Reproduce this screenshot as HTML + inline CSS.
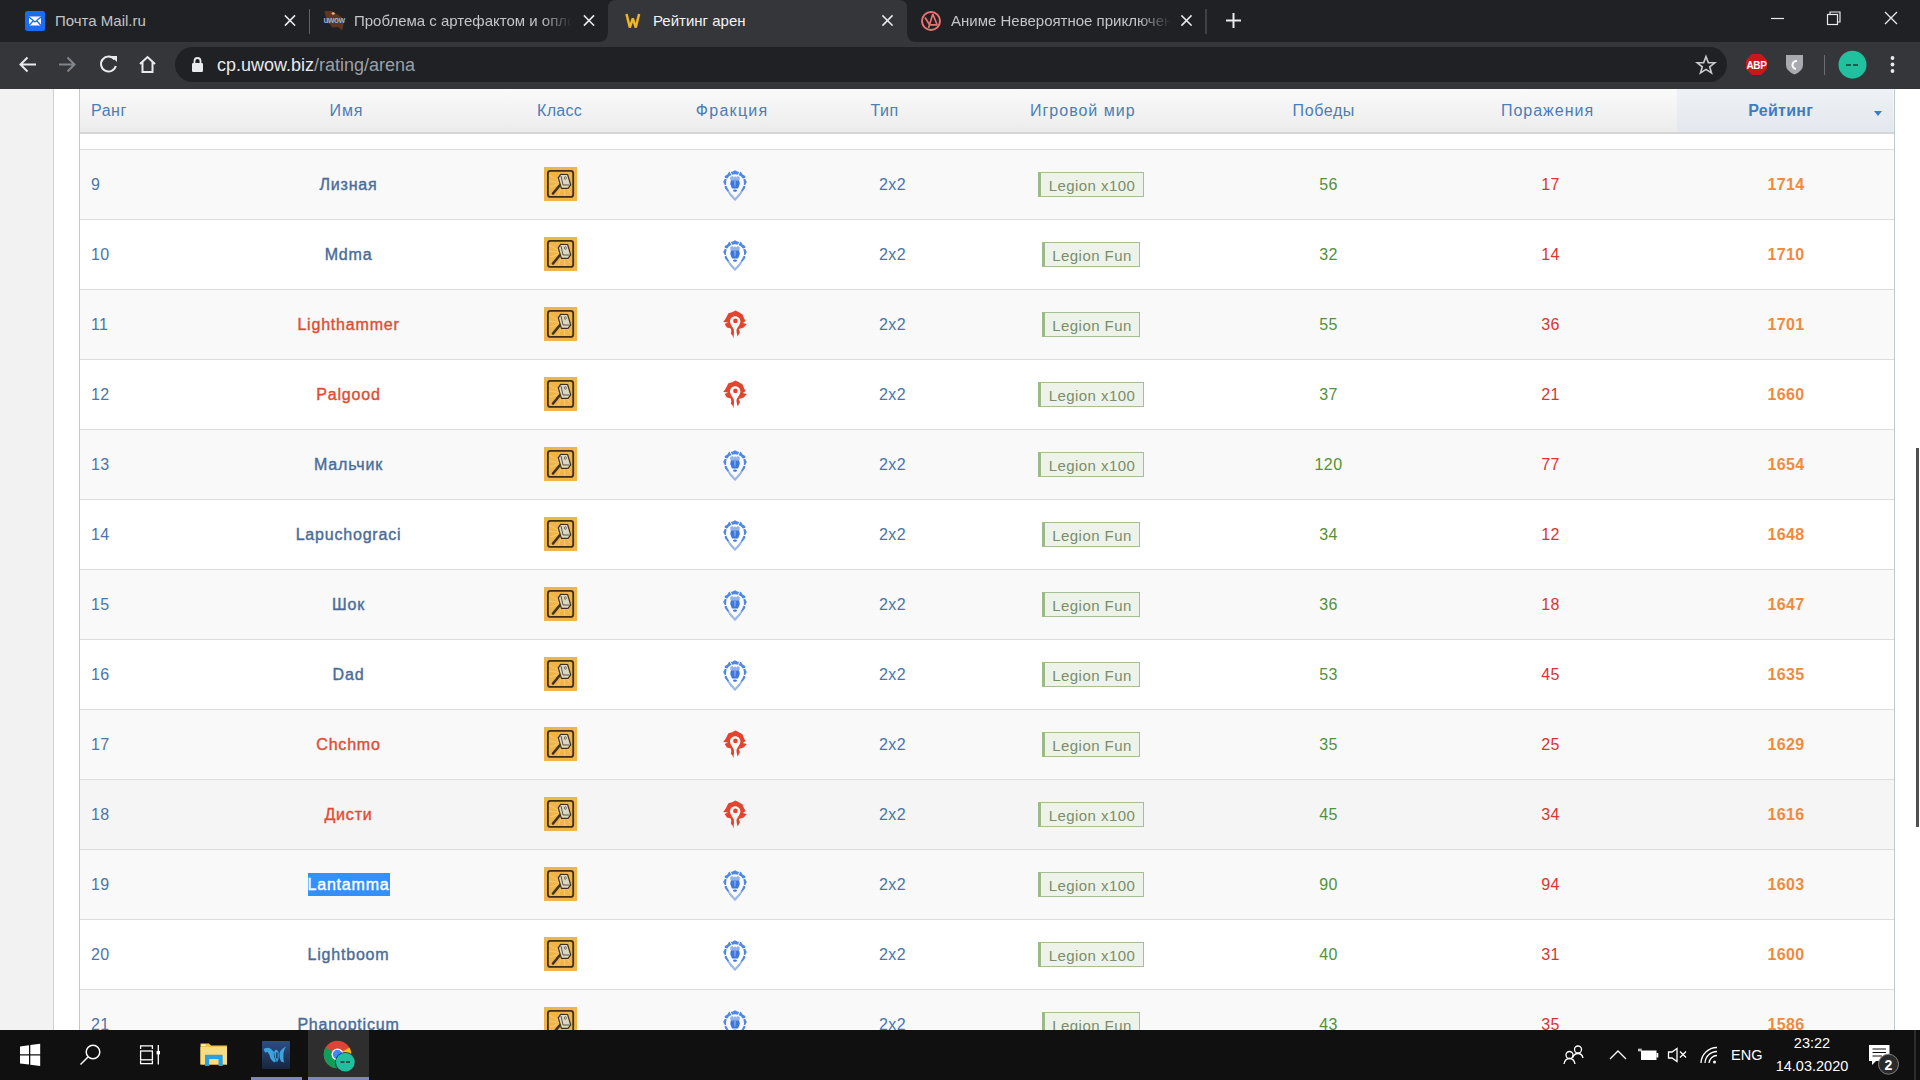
<!DOCTYPE html><html><head><meta charset="utf-8"><style>
*{margin:0;padding:0;box-sizing:border-box}
html,body{width:1920px;height:1080px;overflow:hidden;background:#fff;font-family:"Liberation Sans",sans-serif}
.abs{position:absolute}
#tabbar{left:0;top:0;width:1920px;height:42px;background:#202124}
#toolbar{left:0;top:42px;width:1920px;height:47px;background:#35363a}
#omni{left:175px;top:47px;width:1552px;height:35px;background:#202124;border-radius:18px}
.tabt{font-size:15px;color:#e8eaed;white-space:nowrap;overflow:hidden}
#page{left:0;top:89px;width:1920px;height:941px;background:#fff;overflow:hidden}
#lgray{left:0;top:0;width:54px;height:941px;background:#f2f2f2;border-right:1px solid #cfcfcf}
#tbl{left:79px;top:0;width:1816px;height:941px;border-left:1px solid #bfc9ce;border-right:1px solid #bfc9ce;overflow:hidden}
.row{position:absolute;left:0;width:1814px;height:70px;border-bottom:1px solid #dddddd}
.gray{background:#f9f9f9}
.hov{background:#f5f5f5}
.c{position:absolute;top:0;height:70px;line-height:70px;white-space:nowrap;font-size:16px}
#thead{left:0;top:0;width:1814px;height:45px;background:linear-gradient(#fafafa,#ececec);border-bottom:2px solid #d6d6d6}
.ctr{text-align:center}
.badge{height:25px;line-height:25px;border:1px solid #a5bf94;border-left:3px solid #9cb98a;background:#eef3ea;color:#7b8d6a;font-size:15px;text-align:center;letter-spacing:0.45px;white-space:nowrap}
.th{position:absolute;top:0;height:43px;line-height:43px;font-size:16px;color:#4a7db9;white-space:nowrap}
#taskbar{left:0;top:1030px;width:1920px;height:50px;background:#101010}
</style></head><body>
<div id="tabbar" class="abs"></div>
<div id="toolbar" class="abs"></div>
<div id="omni" class="abs"></div>

<svg class="abs" style="left:0;top:0" width="1920" height="89" viewBox="0 0 1920 89">
<!-- active tab -->
<path d="M598 42 Q608 42 608 32 L608 8 Q608 0 616 0 L899 0 Q907 0 907 8 L907 32 Q907 42 917 42 Z" fill="#35363a"/>
<!-- separators -->
<line x1="309.5" y1="9" x2="309.5" y2="34" stroke="#5f6368" stroke-width="1"/>
<line x1="1206" y1="9" x2="1206" y2="34" stroke="#5f6368" stroke-width="1"/>
<!-- mail icon -->
<rect x="25" y="11" width="20" height="20" rx="2.5" fill="#1a6cf0"/>
<path d="M29 16.5 L41 16.5 L41 25.5 L29 25.5 Z" fill="#fff"/>
<path d="M29 17 L35 22 L41 17 M29 25.5 L33 21 M41 25.5 L37 21" fill="none" stroke="#1a6cf0" stroke-width="1.3"/>
<!-- close x's -->
<g stroke="#e8eaed" stroke-width="1.6" stroke-linecap="square">
<path d="M285.5 16 L294.5 25 M294.5 16 L285.5 25"/>
<path d="M584.5 16 L593.5 25 M593.5 16 L584.5 25"/>
<path d="M883 16 L892 25 M892 16 L883 25"/>
<path d="M1182 16 L1191 25 M1191 16 L1182 25"/>
</g>
<!-- plus -->
<path d="M1233.5 13 L1233.5 28 M1226 20.5 L1241 20.5" stroke="#e8eaed" stroke-width="2"/>
<!-- uwow icon -->
<path d="M324.5 11 L332 11 L335 13 L340 16 L343.5 19 L343.5 25 L342 30.5 L338 27 L332 27.5 L330 24 L327 23 Z" fill="#6a3a22" opacity="0.85"/>
<ellipse cx="333.2" cy="13.5" rx="1.6" ry="1.3" fill="#f0b080"/>
<text x="323.5" y="23" font-family="Liberation Sans" font-weight="bold" font-size="8.2" fill="#8db4d4" letter-spacing="-0.4">uwow</text>
<!-- W icon -->
<path d="M626.5 14 L629.8 27.5 L632.8 18.5 L635.8 27.5 L639.1 14" fill="none" stroke="#5a3a10" stroke-width="3.6" stroke-linejoin="bevel"/>
<path d="M626.5 14 L629.8 27.5 L632.8 18.5 L635.8 27.5 L639.1 14" fill="none" stroke="#eab730" stroke-width="2.4" stroke-linejoin="bevel"/>
<!-- anime icon -->
<circle cx="931" cy="21" r="9" fill="none" stroke="#ec7272" stroke-width="2"/>
<path d="M925 17.5 L930 25.5 M932.8 14 L928.5 28 M932.8 14 L937.2 25 M929.5 24.8 L937.5 24.8" fill="none" stroke="#ec7272" stroke-width="1.7"/>
<!-- window controls -->
<line x1="1771" y1="18.5" x2="1784" y2="18.5" stroke="#e8eaed" stroke-width="1.2"/>
<rect x="1827.5" y="14.5" width="10" height="10" fill="none" stroke="#e8eaed" stroke-width="1.2"/>
<path d="M1830 14.5 L1830 12 L1840 12 L1840 22 L1837.5 22" fill="none" stroke="#e8eaed" stroke-width="1.2"/>
<path d="M1885 12 L1897 24 M1897 12 L1885 24" stroke="#e8eaed" stroke-width="1.3"/>
<!-- nav icons -->
<g fill="none" stroke="#e8eaed" stroke-width="2" stroke-linecap="butt">
<path d="M36 64.5 L20.5 64.5 M27.5 57.5 L20.5 64.5 L27.5 71.5"/>
</g>
<g fill="none" stroke="#80868b" stroke-width="2">
<path d="M59 64.5 L74.5 64.5 M67.5 57.5 L74.5 64.5 L67.5 71.5"/>
</g>
<path d="M114.5 59.5 A7.5 7.5 0 1 0 115.8 66" fill="none" stroke="#e8eaed" stroke-width="2"/>
<path d="M111 56 L117 56 L117 62 Z" fill="#e8eaed"/>
<path d="M140 64 L147.5 57 L155 64 M142.5 62 L142.5 72 L152.5 72 L152.5 62" fill="none" stroke="#e8eaed" stroke-width="2" stroke-linejoin="miter"/>
<!-- lock -->
<rect x="192" y="63" width="11" height="9" rx="1.2" fill="#e8eaed"/>
<path d="M194.5 63 L194.5 61 A3 3 0 0 1 200.5 61 L200.5 63" fill="none" stroke="#e8eaed" stroke-width="1.8"/>
<!-- star -->
<path d="M1706 56.5 L1708.3 62.6 L1714.8 62.8 L1709.7 66.8 L1711.5 73 L1706 69.4 L1700.5 73 L1702.3 66.8 L1697.2 62.8 L1703.7 62.6 Z" fill="none" stroke="#c8cacd" stroke-width="1.6" stroke-linejoin="miter"/>
<!-- ABP -->
<path d="M1752 54 L1761 54 L1767 60 L1767 69 L1761 75 L1752 75 L1746 69 L1746 60 Z" fill="#c5191a"/>
<text x="1756.5" y="68.5" text-anchor="middle" font-family="Liberation Sans" font-weight="bold" font-size="10" fill="#fff" letter-spacing="-0.3">ABP</text>
<!-- shield -->
<path d="M1786 55 L1803 55 L1803 65 Q1803 71 1794.5 74.5 Q1786 71 1786 65 Z" fill="#a8aab0"/>
<path d="M1797 61 A4 4 0 1 0 1796 69" fill="none" stroke="#fff" stroke-width="2"/>
<line x1="1824.5" y1="55" x2="1824.5" y2="75" stroke="#6b6e72" stroke-width="1"/>
<!-- profile -->
<circle cx="1852.5" cy="64.7" r="14" fill="#20c19e"/>
<path d="M1846 65 L1851 65 M1853 65 L1858 65" stroke="#1f3a33" stroke-width="1.6"/>
<!-- menu dots -->
<circle cx="1892.5" cy="58" r="1.9" fill="#e8eaed"/><circle cx="1892.5" cy="64.5" r="1.9" fill="#e8eaed"/><circle cx="1892.5" cy="71" r="1.9" fill="#e8eaed"/>
</svg>
<div class="abs tabt" style="left:55px;top:11px;width:200px;height:20px;line-height:20px;color:#c3c5c8">Почта Mail.ru</div>
<div class="abs tabt" style="left:354px;top:11px;width:218px;height:20px;line-height:20px;color:#c3c5c8;-webkit-mask-image:linear-gradient(90deg,#000 86%,transparent)">Проблема с артефактом и оплотом</div>
<div class="abs tabt" style="left:653px;top:11px;width:200px;height:20px;line-height:20px;color:#f1f3f4">Рейтинг арен</div>
<div class="abs tabt" style="left:951px;top:11px;width:220px;height:20px;line-height:20px;color:#c3c5c8;-webkit-mask-image:linear-gradient(90deg,#000 85%,transparent)">Аниме Невероятное приключение</div>
<div class="abs" style="left:217px;top:54px;height:22px;line-height:22px;font-size:18px;color:#e8eaed;white-space:nowrap">cp.uwow.biz<span style="color:#9aa0a6">/rating/arena</span></div>

<div id="page" class="abs">
<div id="lgray" class="abs"></div>
<div id="tbl" class="abs">
<div class="row" style="top:-9px"></div>
<div class="row gray" style="top:61px;height:70px">
<div class="c " style="left:11px;color:#4a75aa;letter-spacing:0.4px">9</div>
<div class="c ctr" style="left:68.5px;width:400px;color:#4a6c99;-webkit-text-stroke:0.4px #4a6c99;letter-spacing:0.8px">Лизная</div>
<div class="abs" style="left:464px;top:17px"><svg width="33" height="34" viewBox="0 0 33 34" style="display:block"><rect x="0" y="0" width="33" height="34" fill="#f1b547"/>
<g stroke="#f8d27a" stroke-width="0.8" opacity="0.9"><line x1="19" y1="16" x2="5" y2="8"/><line x1="19" y1="16" x2="5" y2="14"/><line x1="19" y1="16" x2="6" y2="20"/><line x1="19" y1="16" x2="14" y2="29"/><line x1="19" y1="16" x2="21" y2="29"/><line x1="19" y1="16" x2="27" y2="27"/></g>
<rect x="3.9" y="3.9" width="25.3" height="26" rx="2.5" fill="none" stroke="#3e2f14" stroke-width="1.8"/>
<line x1="9" y1="26.5" x2="16" y2="18" stroke="#3b3222" stroke-width="2.6" stroke-linecap="round"/>
<path d="M16.6 7.3 L23.6 7.5 L26.7 17.8 L24 21.3 L17.4 21.3 L14.3 10.8 Z" fill="#dcd7c2" stroke="#3a3020" stroke-width="1.2" stroke-linejoin="round"/>
<path d="M17 9 L19 18 L25.5 18" fill="none" stroke="#3a3020" stroke-width="0.8"/>
<ellipse cx="21.3" cy="11" rx="1" ry="1.4" fill="none" stroke="#5a5040" stroke-width="0.7"/>
</svg></div>
<div class="abs" style="left:643px;top:19.5px"><svg width="24" height="31" viewBox="0 0 24 31" style="display:block">
<path d="M1.78 17.90 L1.66 14.77 L0.20 12.00 L1.66 9.23 L1.78 6.10 L4.43 4.43 L6.10 1.78 L9.23 1.66 L12.00 0.20 L14.77 1.66 L17.90 1.78 L19.57 4.43 L22.22 6.10 L22.34 9.23 L23.80 12.00 L22.34 14.77 L22.22 17.90 L19.50 21.50 L16.50 26.00 L12.00 30.80 L7.50 26.00 L4.50 21.50 Z" fill="#4f87e4"/>
<path d="M4.5 21.5 L7.5 26 L12 30.8 L16.5 26 L19.5 21.5 L17 21 L12 27 L7 21 Z" fill="#9cb7e8"/>
<path d="M12 28 L6.8 22 L4.4 18 A9 9 0 1 1 19.6 18 L17.2 22 Z" fill="#f9f9f9"/>
<g stroke="#f9f9f9" stroke-width="1"><line x1="15.38" y1="4.75" x2="17.28" y2="0.67"/><line x1="8.62" y1="4.75" x2="6.72" y2="0.67"/><line x1="4.48" y1="9.26" x2="0.25" y2="7.72"/><line x1="19.52" y1="9.26" x2="23.75" y2="7.72"/><line x1="4.48" y1="14.74" x2="0.25" y2="16.28"/><line x1="19.52" y1="14.74" x2="23.75" y2="16.28"/></g>
<path d="M7.3 10 L7.3 7 L9.5 6 L10.8 7.5 L12 5.9 L13.2 7.5 L14.5 6 L16.7 7 L16.7 10 Z" fill="#8fb2ec"/>
<path d="M7.9 10.3 L16.1 10.3 L16.8 14 L15 18.5 L9 18.5 L7.2 14 Z" fill="#3f78dc"/>
<path d="M11 10.8 L13 10.8 L12.6 16.5 L11.4 16.5 Z" fill="#78a4ef"/>
<ellipse cx="12" cy="20.6" rx="2" ry="1.2" fill="#3f76d8"/>
</svg></div>
<div class="c ctr" style="left:712.5px;width:200px;color:#4a75aa;letter-spacing:0.4px">2x2</div>
<div class="abs badge" style="left:958.0px;top:22px;width:106px">Legion x100</div>
<div class="c ctr" style="left:1148.5px;width:200px;color:#52923a;letter-spacing:0.4px">56</div>
<div class="c ctr" style="left:1370.5px;width:200px;color:#d9352f;letter-spacing:0.4px">17</div>
<div class="c ctr" style="left:1606px;width:200px;color:#f08a3c;font-weight:bold;letter-spacing:0.4px">1714</div>
</div>
<div class="row" style="top:131px;height:70px">
<div class="c " style="left:11px;color:#4a75aa;letter-spacing:0.4px">10</div>
<div class="c ctr" style="left:68.5px;width:400px;color:#4a6c99;-webkit-text-stroke:0.4px #4a6c99;letter-spacing:0.8px">Mdma</div>
<div class="abs" style="left:464px;top:17px"><svg width="33" height="34" viewBox="0 0 33 34" style="display:block"><rect x="0" y="0" width="33" height="34" fill="#f1b547"/>
<g stroke="#f8d27a" stroke-width="0.8" opacity="0.9"><line x1="19" y1="16" x2="5" y2="8"/><line x1="19" y1="16" x2="5" y2="14"/><line x1="19" y1="16" x2="6" y2="20"/><line x1="19" y1="16" x2="14" y2="29"/><line x1="19" y1="16" x2="21" y2="29"/><line x1="19" y1="16" x2="27" y2="27"/></g>
<rect x="3.9" y="3.9" width="25.3" height="26" rx="2.5" fill="none" stroke="#3e2f14" stroke-width="1.8"/>
<line x1="9" y1="26.5" x2="16" y2="18" stroke="#3b3222" stroke-width="2.6" stroke-linecap="round"/>
<path d="M16.6 7.3 L23.6 7.5 L26.7 17.8 L24 21.3 L17.4 21.3 L14.3 10.8 Z" fill="#dcd7c2" stroke="#3a3020" stroke-width="1.2" stroke-linejoin="round"/>
<path d="M17 9 L19 18 L25.5 18" fill="none" stroke="#3a3020" stroke-width="0.8"/>
<ellipse cx="21.3" cy="11" rx="1" ry="1.4" fill="none" stroke="#5a5040" stroke-width="0.7"/>
</svg></div>
<div class="abs" style="left:643px;top:19.5px"><svg width="24" height="31" viewBox="0 0 24 31" style="display:block">
<path d="M1.78 17.90 L1.66 14.77 L0.20 12.00 L1.66 9.23 L1.78 6.10 L4.43 4.43 L6.10 1.78 L9.23 1.66 L12.00 0.20 L14.77 1.66 L17.90 1.78 L19.57 4.43 L22.22 6.10 L22.34 9.23 L23.80 12.00 L22.34 14.77 L22.22 17.90 L19.50 21.50 L16.50 26.00 L12.00 30.80 L7.50 26.00 L4.50 21.50 Z" fill="#4f87e4"/>
<path d="M4.5 21.5 L7.5 26 L12 30.8 L16.5 26 L19.5 21.5 L17 21 L12 27 L7 21 Z" fill="#9cb7e8"/>
<path d="M12 28 L6.8 22 L4.4 18 A9 9 0 1 1 19.6 18 L17.2 22 Z" fill="#ffffff"/>
<g stroke="#ffffff" stroke-width="1"><line x1="15.38" y1="4.75" x2="17.28" y2="0.67"/><line x1="8.62" y1="4.75" x2="6.72" y2="0.67"/><line x1="4.48" y1="9.26" x2="0.25" y2="7.72"/><line x1="19.52" y1="9.26" x2="23.75" y2="7.72"/><line x1="4.48" y1="14.74" x2="0.25" y2="16.28"/><line x1="19.52" y1="14.74" x2="23.75" y2="16.28"/></g>
<path d="M7.3 10 L7.3 7 L9.5 6 L10.8 7.5 L12 5.9 L13.2 7.5 L14.5 6 L16.7 7 L16.7 10 Z" fill="#8fb2ec"/>
<path d="M7.9 10.3 L16.1 10.3 L16.8 14 L15 18.5 L9 18.5 L7.2 14 Z" fill="#3f78dc"/>
<path d="M11 10.8 L13 10.8 L12.6 16.5 L11.4 16.5 Z" fill="#78a4ef"/>
<ellipse cx="12" cy="20.6" rx="2" ry="1.2" fill="#3f76d8"/>
</svg></div>
<div class="c ctr" style="left:712.5px;width:200px;color:#4a75aa;letter-spacing:0.4px">2x2</div>
<div class="abs badge" style="left:962.0px;top:22px;width:98px">Legion Fun</div>
<div class="c ctr" style="left:1148.5px;width:200px;color:#52923a;letter-spacing:0.4px">32</div>
<div class="c ctr" style="left:1370.5px;width:200px;color:#d9352f;letter-spacing:0.4px">14</div>
<div class="c ctr" style="left:1606px;width:200px;color:#f08a3c;font-weight:bold;letter-spacing:0.4px">1710</div>
</div>
<div class="row gray" style="top:201px;height:70px">
<div class="c " style="left:11px;color:#4a75aa;letter-spacing:0.4px">11</div>
<div class="c ctr" style="left:68.5px;width:400px;color:#e04c34;-webkit-text-stroke:0.4px #e04c34;letter-spacing:0.8px">Lighthammer</div>
<div class="abs" style="left:464px;top:17px"><svg width="33" height="34" viewBox="0 0 33 34" style="display:block"><rect x="0" y="0" width="33" height="34" fill="#f1b547"/>
<g stroke="#f8d27a" stroke-width="0.8" opacity="0.9"><line x1="19" y1="16" x2="5" y2="8"/><line x1="19" y1="16" x2="5" y2="14"/><line x1="19" y1="16" x2="6" y2="20"/><line x1="19" y1="16" x2="14" y2="29"/><line x1="19" y1="16" x2="21" y2="29"/><line x1="19" y1="16" x2="27" y2="27"/></g>
<rect x="3.9" y="3.9" width="25.3" height="26" rx="2.5" fill="none" stroke="#3e2f14" stroke-width="1.8"/>
<line x1="9" y1="26.5" x2="16" y2="18" stroke="#3b3222" stroke-width="2.6" stroke-linecap="round"/>
<path d="M16.6 7.3 L23.6 7.5 L26.7 17.8 L24 21.3 L17.4 21.3 L14.3 10.8 Z" fill="#dcd7c2" stroke="#3a3020" stroke-width="1.2" stroke-linejoin="round"/>
<path d="M17 9 L19 18 L25.5 18" fill="none" stroke="#3a3020" stroke-width="0.8"/>
<ellipse cx="21.3" cy="11" rx="1" ry="1.4" fill="none" stroke="#5a5040" stroke-width="0.7"/>
</svg></div>
<div class="abs" style="left:643px;top:19.5px"><svg width="24" height="29" viewBox="0 0 24 29" style="display:block">
<path d="M12.5 0.6 L16 2.2 L19.6 4.4 L20.5 7 L21.7 9.5 L22.6 10.9 L19.9 13 L23.8 13.9 L22 16 L20.8 17.5 L17.5 18.6 L15.8 18.9 L17 22.2 L14.6 26.4 L13.2 21 L12.2 20 L11.2 21 L10.4 28.4 L9.5 25.5 L7.8 23.7 L8.3 21.5 L7.8 18.6 L3.9 17.5 L1.6 13.9 L5.1 12.4 L0.2 12.1 L2.1 9.5 L3.5 7 L5.4 3.2 L9 2.2 Z" fill="#e2452f"/>
<path d="M12.2 6.3 C15.1 6.3 17.4 8.6 17.4 11.5 C17.4 14.5 14.8 16.5 13.6 19.5 L12.5 28.5 L11.9 28.5 L10.8 19.5 C9.6 16.5 7 14.5 7 11.5 C7 8.6 9.3 6.3 12.2 6.3 Z" fill="#f9f9f9"/>
<circle cx="12.4" cy="10.9" r="2.3" fill="#e2452f"/>
</svg></div>
<div class="c ctr" style="left:712.5px;width:200px;color:#4a75aa;letter-spacing:0.4px">2x2</div>
<div class="abs badge" style="left:962.0px;top:22px;width:98px">Legion Fun</div>
<div class="c ctr" style="left:1148.5px;width:200px;color:#52923a;letter-spacing:0.4px">55</div>
<div class="c ctr" style="left:1370.5px;width:200px;color:#d9352f;letter-spacing:0.4px">36</div>
<div class="c ctr" style="left:1606px;width:200px;color:#f08a3c;font-weight:bold;letter-spacing:0.4px">1701</div>
</div>
<div class="row" style="top:271px;height:70px">
<div class="c " style="left:11px;color:#4a75aa;letter-spacing:0.4px">12</div>
<div class="c ctr" style="left:68.5px;width:400px;color:#e04c34;-webkit-text-stroke:0.4px #e04c34;letter-spacing:0.8px">Palgood</div>
<div class="abs" style="left:464px;top:17px"><svg width="33" height="34" viewBox="0 0 33 34" style="display:block"><rect x="0" y="0" width="33" height="34" fill="#f1b547"/>
<g stroke="#f8d27a" stroke-width="0.8" opacity="0.9"><line x1="19" y1="16" x2="5" y2="8"/><line x1="19" y1="16" x2="5" y2="14"/><line x1="19" y1="16" x2="6" y2="20"/><line x1="19" y1="16" x2="14" y2="29"/><line x1="19" y1="16" x2="21" y2="29"/><line x1="19" y1="16" x2="27" y2="27"/></g>
<rect x="3.9" y="3.9" width="25.3" height="26" rx="2.5" fill="none" stroke="#3e2f14" stroke-width="1.8"/>
<line x1="9" y1="26.5" x2="16" y2="18" stroke="#3b3222" stroke-width="2.6" stroke-linecap="round"/>
<path d="M16.6 7.3 L23.6 7.5 L26.7 17.8 L24 21.3 L17.4 21.3 L14.3 10.8 Z" fill="#dcd7c2" stroke="#3a3020" stroke-width="1.2" stroke-linejoin="round"/>
<path d="M17 9 L19 18 L25.5 18" fill="none" stroke="#3a3020" stroke-width="0.8"/>
<ellipse cx="21.3" cy="11" rx="1" ry="1.4" fill="none" stroke="#5a5040" stroke-width="0.7"/>
</svg></div>
<div class="abs" style="left:643px;top:19.5px"><svg width="24" height="29" viewBox="0 0 24 29" style="display:block">
<path d="M12.5 0.6 L16 2.2 L19.6 4.4 L20.5 7 L21.7 9.5 L22.6 10.9 L19.9 13 L23.8 13.9 L22 16 L20.8 17.5 L17.5 18.6 L15.8 18.9 L17 22.2 L14.6 26.4 L13.2 21 L12.2 20 L11.2 21 L10.4 28.4 L9.5 25.5 L7.8 23.7 L8.3 21.5 L7.8 18.6 L3.9 17.5 L1.6 13.9 L5.1 12.4 L0.2 12.1 L2.1 9.5 L3.5 7 L5.4 3.2 L9 2.2 Z" fill="#e2452f"/>
<path d="M12.2 6.3 C15.1 6.3 17.4 8.6 17.4 11.5 C17.4 14.5 14.8 16.5 13.6 19.5 L12.5 28.5 L11.9 28.5 L10.8 19.5 C9.6 16.5 7 14.5 7 11.5 C7 8.6 9.3 6.3 12.2 6.3 Z" fill="#ffffff"/>
<circle cx="12.4" cy="10.9" r="2.3" fill="#e2452f"/>
</svg></div>
<div class="c ctr" style="left:712.5px;width:200px;color:#4a75aa;letter-spacing:0.4px">2x2</div>
<div class="abs badge" style="left:958.0px;top:22px;width:106px">Legion x100</div>
<div class="c ctr" style="left:1148.5px;width:200px;color:#52923a;letter-spacing:0.4px">37</div>
<div class="c ctr" style="left:1370.5px;width:200px;color:#d9352f;letter-spacing:0.4px">21</div>
<div class="c ctr" style="left:1606px;width:200px;color:#f08a3c;font-weight:bold;letter-spacing:0.4px">1660</div>
</div>
<div class="row gray" style="top:341px;height:70px">
<div class="c " style="left:11px;color:#4a75aa;letter-spacing:0.4px">13</div>
<div class="c ctr" style="left:68.5px;width:400px;color:#4a6c99;-webkit-text-stroke:0.4px #4a6c99;letter-spacing:0.8px">Мальчик</div>
<div class="abs" style="left:464px;top:17px"><svg width="33" height="34" viewBox="0 0 33 34" style="display:block"><rect x="0" y="0" width="33" height="34" fill="#f1b547"/>
<g stroke="#f8d27a" stroke-width="0.8" opacity="0.9"><line x1="19" y1="16" x2="5" y2="8"/><line x1="19" y1="16" x2="5" y2="14"/><line x1="19" y1="16" x2="6" y2="20"/><line x1="19" y1="16" x2="14" y2="29"/><line x1="19" y1="16" x2="21" y2="29"/><line x1="19" y1="16" x2="27" y2="27"/></g>
<rect x="3.9" y="3.9" width="25.3" height="26" rx="2.5" fill="none" stroke="#3e2f14" stroke-width="1.8"/>
<line x1="9" y1="26.5" x2="16" y2="18" stroke="#3b3222" stroke-width="2.6" stroke-linecap="round"/>
<path d="M16.6 7.3 L23.6 7.5 L26.7 17.8 L24 21.3 L17.4 21.3 L14.3 10.8 Z" fill="#dcd7c2" stroke="#3a3020" stroke-width="1.2" stroke-linejoin="round"/>
<path d="M17 9 L19 18 L25.5 18" fill="none" stroke="#3a3020" stroke-width="0.8"/>
<ellipse cx="21.3" cy="11" rx="1" ry="1.4" fill="none" stroke="#5a5040" stroke-width="0.7"/>
</svg></div>
<div class="abs" style="left:643px;top:19.5px"><svg width="24" height="31" viewBox="0 0 24 31" style="display:block">
<path d="M1.78 17.90 L1.66 14.77 L0.20 12.00 L1.66 9.23 L1.78 6.10 L4.43 4.43 L6.10 1.78 L9.23 1.66 L12.00 0.20 L14.77 1.66 L17.90 1.78 L19.57 4.43 L22.22 6.10 L22.34 9.23 L23.80 12.00 L22.34 14.77 L22.22 17.90 L19.50 21.50 L16.50 26.00 L12.00 30.80 L7.50 26.00 L4.50 21.50 Z" fill="#4f87e4"/>
<path d="M4.5 21.5 L7.5 26 L12 30.8 L16.5 26 L19.5 21.5 L17 21 L12 27 L7 21 Z" fill="#9cb7e8"/>
<path d="M12 28 L6.8 22 L4.4 18 A9 9 0 1 1 19.6 18 L17.2 22 Z" fill="#f9f9f9"/>
<g stroke="#f9f9f9" stroke-width="1"><line x1="15.38" y1="4.75" x2="17.28" y2="0.67"/><line x1="8.62" y1="4.75" x2="6.72" y2="0.67"/><line x1="4.48" y1="9.26" x2="0.25" y2="7.72"/><line x1="19.52" y1="9.26" x2="23.75" y2="7.72"/><line x1="4.48" y1="14.74" x2="0.25" y2="16.28"/><line x1="19.52" y1="14.74" x2="23.75" y2="16.28"/></g>
<path d="M7.3 10 L7.3 7 L9.5 6 L10.8 7.5 L12 5.9 L13.2 7.5 L14.5 6 L16.7 7 L16.7 10 Z" fill="#8fb2ec"/>
<path d="M7.9 10.3 L16.1 10.3 L16.8 14 L15 18.5 L9 18.5 L7.2 14 Z" fill="#3f78dc"/>
<path d="M11 10.8 L13 10.8 L12.6 16.5 L11.4 16.5 Z" fill="#78a4ef"/>
<ellipse cx="12" cy="20.6" rx="2" ry="1.2" fill="#3f76d8"/>
</svg></div>
<div class="c ctr" style="left:712.5px;width:200px;color:#4a75aa;letter-spacing:0.4px">2x2</div>
<div class="abs badge" style="left:958.0px;top:22px;width:106px">Legion x100</div>
<div class="c ctr" style="left:1148.5px;width:200px;color:#52923a;letter-spacing:0.4px">120</div>
<div class="c ctr" style="left:1370.5px;width:200px;color:#d9352f;letter-spacing:0.4px">77</div>
<div class="c ctr" style="left:1606px;width:200px;color:#f08a3c;font-weight:bold;letter-spacing:0.4px">1654</div>
</div>
<div class="row" style="top:411px;height:70px">
<div class="c " style="left:11px;color:#4a75aa;letter-spacing:0.4px">14</div>
<div class="c ctr" style="left:68.5px;width:400px;color:#4a6c99;-webkit-text-stroke:0.4px #4a6c99;letter-spacing:0.8px">Lapuchograci</div>
<div class="abs" style="left:464px;top:17px"><svg width="33" height="34" viewBox="0 0 33 34" style="display:block"><rect x="0" y="0" width="33" height="34" fill="#f1b547"/>
<g stroke="#f8d27a" stroke-width="0.8" opacity="0.9"><line x1="19" y1="16" x2="5" y2="8"/><line x1="19" y1="16" x2="5" y2="14"/><line x1="19" y1="16" x2="6" y2="20"/><line x1="19" y1="16" x2="14" y2="29"/><line x1="19" y1="16" x2="21" y2="29"/><line x1="19" y1="16" x2="27" y2="27"/></g>
<rect x="3.9" y="3.9" width="25.3" height="26" rx="2.5" fill="none" stroke="#3e2f14" stroke-width="1.8"/>
<line x1="9" y1="26.5" x2="16" y2="18" stroke="#3b3222" stroke-width="2.6" stroke-linecap="round"/>
<path d="M16.6 7.3 L23.6 7.5 L26.7 17.8 L24 21.3 L17.4 21.3 L14.3 10.8 Z" fill="#dcd7c2" stroke="#3a3020" stroke-width="1.2" stroke-linejoin="round"/>
<path d="M17 9 L19 18 L25.5 18" fill="none" stroke="#3a3020" stroke-width="0.8"/>
<ellipse cx="21.3" cy="11" rx="1" ry="1.4" fill="none" stroke="#5a5040" stroke-width="0.7"/>
</svg></div>
<div class="abs" style="left:643px;top:19.5px"><svg width="24" height="31" viewBox="0 0 24 31" style="display:block">
<path d="M1.78 17.90 L1.66 14.77 L0.20 12.00 L1.66 9.23 L1.78 6.10 L4.43 4.43 L6.10 1.78 L9.23 1.66 L12.00 0.20 L14.77 1.66 L17.90 1.78 L19.57 4.43 L22.22 6.10 L22.34 9.23 L23.80 12.00 L22.34 14.77 L22.22 17.90 L19.50 21.50 L16.50 26.00 L12.00 30.80 L7.50 26.00 L4.50 21.50 Z" fill="#4f87e4"/>
<path d="M4.5 21.5 L7.5 26 L12 30.8 L16.5 26 L19.5 21.5 L17 21 L12 27 L7 21 Z" fill="#9cb7e8"/>
<path d="M12 28 L6.8 22 L4.4 18 A9 9 0 1 1 19.6 18 L17.2 22 Z" fill="#ffffff"/>
<g stroke="#ffffff" stroke-width="1"><line x1="15.38" y1="4.75" x2="17.28" y2="0.67"/><line x1="8.62" y1="4.75" x2="6.72" y2="0.67"/><line x1="4.48" y1="9.26" x2="0.25" y2="7.72"/><line x1="19.52" y1="9.26" x2="23.75" y2="7.72"/><line x1="4.48" y1="14.74" x2="0.25" y2="16.28"/><line x1="19.52" y1="14.74" x2="23.75" y2="16.28"/></g>
<path d="M7.3 10 L7.3 7 L9.5 6 L10.8 7.5 L12 5.9 L13.2 7.5 L14.5 6 L16.7 7 L16.7 10 Z" fill="#8fb2ec"/>
<path d="M7.9 10.3 L16.1 10.3 L16.8 14 L15 18.5 L9 18.5 L7.2 14 Z" fill="#3f78dc"/>
<path d="M11 10.8 L13 10.8 L12.6 16.5 L11.4 16.5 Z" fill="#78a4ef"/>
<ellipse cx="12" cy="20.6" rx="2" ry="1.2" fill="#3f76d8"/>
</svg></div>
<div class="c ctr" style="left:712.5px;width:200px;color:#4a75aa;letter-spacing:0.4px">2x2</div>
<div class="abs badge" style="left:962.0px;top:22px;width:98px">Legion Fun</div>
<div class="c ctr" style="left:1148.5px;width:200px;color:#52923a;letter-spacing:0.4px">34</div>
<div class="c ctr" style="left:1370.5px;width:200px;color:#d9352f;letter-spacing:0.4px">12</div>
<div class="c ctr" style="left:1606px;width:200px;color:#f08a3c;font-weight:bold;letter-spacing:0.4px">1648</div>
</div>
<div class="row gray" style="top:481px;height:70px">
<div class="c " style="left:11px;color:#4a75aa;letter-spacing:0.4px">15</div>
<div class="c ctr" style="left:68.5px;width:400px;color:#4a6c99;-webkit-text-stroke:0.4px #4a6c99;letter-spacing:0.8px">Шок</div>
<div class="abs" style="left:464px;top:17px"><svg width="33" height="34" viewBox="0 0 33 34" style="display:block"><rect x="0" y="0" width="33" height="34" fill="#f1b547"/>
<g stroke="#f8d27a" stroke-width="0.8" opacity="0.9"><line x1="19" y1="16" x2="5" y2="8"/><line x1="19" y1="16" x2="5" y2="14"/><line x1="19" y1="16" x2="6" y2="20"/><line x1="19" y1="16" x2="14" y2="29"/><line x1="19" y1="16" x2="21" y2="29"/><line x1="19" y1="16" x2="27" y2="27"/></g>
<rect x="3.9" y="3.9" width="25.3" height="26" rx="2.5" fill="none" stroke="#3e2f14" stroke-width="1.8"/>
<line x1="9" y1="26.5" x2="16" y2="18" stroke="#3b3222" stroke-width="2.6" stroke-linecap="round"/>
<path d="M16.6 7.3 L23.6 7.5 L26.7 17.8 L24 21.3 L17.4 21.3 L14.3 10.8 Z" fill="#dcd7c2" stroke="#3a3020" stroke-width="1.2" stroke-linejoin="round"/>
<path d="M17 9 L19 18 L25.5 18" fill="none" stroke="#3a3020" stroke-width="0.8"/>
<ellipse cx="21.3" cy="11" rx="1" ry="1.4" fill="none" stroke="#5a5040" stroke-width="0.7"/>
</svg></div>
<div class="abs" style="left:643px;top:19.5px"><svg width="24" height="31" viewBox="0 0 24 31" style="display:block">
<path d="M1.78 17.90 L1.66 14.77 L0.20 12.00 L1.66 9.23 L1.78 6.10 L4.43 4.43 L6.10 1.78 L9.23 1.66 L12.00 0.20 L14.77 1.66 L17.90 1.78 L19.57 4.43 L22.22 6.10 L22.34 9.23 L23.80 12.00 L22.34 14.77 L22.22 17.90 L19.50 21.50 L16.50 26.00 L12.00 30.80 L7.50 26.00 L4.50 21.50 Z" fill="#4f87e4"/>
<path d="M4.5 21.5 L7.5 26 L12 30.8 L16.5 26 L19.5 21.5 L17 21 L12 27 L7 21 Z" fill="#9cb7e8"/>
<path d="M12 28 L6.8 22 L4.4 18 A9 9 0 1 1 19.6 18 L17.2 22 Z" fill="#f9f9f9"/>
<g stroke="#f9f9f9" stroke-width="1"><line x1="15.38" y1="4.75" x2="17.28" y2="0.67"/><line x1="8.62" y1="4.75" x2="6.72" y2="0.67"/><line x1="4.48" y1="9.26" x2="0.25" y2="7.72"/><line x1="19.52" y1="9.26" x2="23.75" y2="7.72"/><line x1="4.48" y1="14.74" x2="0.25" y2="16.28"/><line x1="19.52" y1="14.74" x2="23.75" y2="16.28"/></g>
<path d="M7.3 10 L7.3 7 L9.5 6 L10.8 7.5 L12 5.9 L13.2 7.5 L14.5 6 L16.7 7 L16.7 10 Z" fill="#8fb2ec"/>
<path d="M7.9 10.3 L16.1 10.3 L16.8 14 L15 18.5 L9 18.5 L7.2 14 Z" fill="#3f78dc"/>
<path d="M11 10.8 L13 10.8 L12.6 16.5 L11.4 16.5 Z" fill="#78a4ef"/>
<ellipse cx="12" cy="20.6" rx="2" ry="1.2" fill="#3f76d8"/>
</svg></div>
<div class="c ctr" style="left:712.5px;width:200px;color:#4a75aa;letter-spacing:0.4px">2x2</div>
<div class="abs badge" style="left:962.0px;top:22px;width:98px">Legion Fun</div>
<div class="c ctr" style="left:1148.5px;width:200px;color:#52923a;letter-spacing:0.4px">36</div>
<div class="c ctr" style="left:1370.5px;width:200px;color:#d9352f;letter-spacing:0.4px">18</div>
<div class="c ctr" style="left:1606px;width:200px;color:#f08a3c;font-weight:bold;letter-spacing:0.4px">1647</div>
</div>
<div class="row" style="top:551px;height:70px">
<div class="c " style="left:11px;color:#4a75aa;letter-spacing:0.4px">16</div>
<div class="c ctr" style="left:68.5px;width:400px;color:#4a6c99;-webkit-text-stroke:0.4px #4a6c99;letter-spacing:0.8px">Dad</div>
<div class="abs" style="left:464px;top:17px"><svg width="33" height="34" viewBox="0 0 33 34" style="display:block"><rect x="0" y="0" width="33" height="34" fill="#f1b547"/>
<g stroke="#f8d27a" stroke-width="0.8" opacity="0.9"><line x1="19" y1="16" x2="5" y2="8"/><line x1="19" y1="16" x2="5" y2="14"/><line x1="19" y1="16" x2="6" y2="20"/><line x1="19" y1="16" x2="14" y2="29"/><line x1="19" y1="16" x2="21" y2="29"/><line x1="19" y1="16" x2="27" y2="27"/></g>
<rect x="3.9" y="3.9" width="25.3" height="26" rx="2.5" fill="none" stroke="#3e2f14" stroke-width="1.8"/>
<line x1="9" y1="26.5" x2="16" y2="18" stroke="#3b3222" stroke-width="2.6" stroke-linecap="round"/>
<path d="M16.6 7.3 L23.6 7.5 L26.7 17.8 L24 21.3 L17.4 21.3 L14.3 10.8 Z" fill="#dcd7c2" stroke="#3a3020" stroke-width="1.2" stroke-linejoin="round"/>
<path d="M17 9 L19 18 L25.5 18" fill="none" stroke="#3a3020" stroke-width="0.8"/>
<ellipse cx="21.3" cy="11" rx="1" ry="1.4" fill="none" stroke="#5a5040" stroke-width="0.7"/>
</svg></div>
<div class="abs" style="left:643px;top:19.5px"><svg width="24" height="31" viewBox="0 0 24 31" style="display:block">
<path d="M1.78 17.90 L1.66 14.77 L0.20 12.00 L1.66 9.23 L1.78 6.10 L4.43 4.43 L6.10 1.78 L9.23 1.66 L12.00 0.20 L14.77 1.66 L17.90 1.78 L19.57 4.43 L22.22 6.10 L22.34 9.23 L23.80 12.00 L22.34 14.77 L22.22 17.90 L19.50 21.50 L16.50 26.00 L12.00 30.80 L7.50 26.00 L4.50 21.50 Z" fill="#4f87e4"/>
<path d="M4.5 21.5 L7.5 26 L12 30.8 L16.5 26 L19.5 21.5 L17 21 L12 27 L7 21 Z" fill="#9cb7e8"/>
<path d="M12 28 L6.8 22 L4.4 18 A9 9 0 1 1 19.6 18 L17.2 22 Z" fill="#ffffff"/>
<g stroke="#ffffff" stroke-width="1"><line x1="15.38" y1="4.75" x2="17.28" y2="0.67"/><line x1="8.62" y1="4.75" x2="6.72" y2="0.67"/><line x1="4.48" y1="9.26" x2="0.25" y2="7.72"/><line x1="19.52" y1="9.26" x2="23.75" y2="7.72"/><line x1="4.48" y1="14.74" x2="0.25" y2="16.28"/><line x1="19.52" y1="14.74" x2="23.75" y2="16.28"/></g>
<path d="M7.3 10 L7.3 7 L9.5 6 L10.8 7.5 L12 5.9 L13.2 7.5 L14.5 6 L16.7 7 L16.7 10 Z" fill="#8fb2ec"/>
<path d="M7.9 10.3 L16.1 10.3 L16.8 14 L15 18.5 L9 18.5 L7.2 14 Z" fill="#3f78dc"/>
<path d="M11 10.8 L13 10.8 L12.6 16.5 L11.4 16.5 Z" fill="#78a4ef"/>
<ellipse cx="12" cy="20.6" rx="2" ry="1.2" fill="#3f76d8"/>
</svg></div>
<div class="c ctr" style="left:712.5px;width:200px;color:#4a75aa;letter-spacing:0.4px">2x2</div>
<div class="abs badge" style="left:962.0px;top:22px;width:98px">Legion Fun</div>
<div class="c ctr" style="left:1148.5px;width:200px;color:#52923a;letter-spacing:0.4px">53</div>
<div class="c ctr" style="left:1370.5px;width:200px;color:#d9352f;letter-spacing:0.4px">45</div>
<div class="c ctr" style="left:1606px;width:200px;color:#f08a3c;font-weight:bold;letter-spacing:0.4px">1635</div>
</div>
<div class="row gray" style="top:621px;height:70px">
<div class="c " style="left:11px;color:#4a75aa;letter-spacing:0.4px">17</div>
<div class="c ctr" style="left:68.5px;width:400px;color:#e04c34;-webkit-text-stroke:0.4px #e04c34;letter-spacing:0.8px">Chchmo</div>
<div class="abs" style="left:464px;top:17px"><svg width="33" height="34" viewBox="0 0 33 34" style="display:block"><rect x="0" y="0" width="33" height="34" fill="#f1b547"/>
<g stroke="#f8d27a" stroke-width="0.8" opacity="0.9"><line x1="19" y1="16" x2="5" y2="8"/><line x1="19" y1="16" x2="5" y2="14"/><line x1="19" y1="16" x2="6" y2="20"/><line x1="19" y1="16" x2="14" y2="29"/><line x1="19" y1="16" x2="21" y2="29"/><line x1="19" y1="16" x2="27" y2="27"/></g>
<rect x="3.9" y="3.9" width="25.3" height="26" rx="2.5" fill="none" stroke="#3e2f14" stroke-width="1.8"/>
<line x1="9" y1="26.5" x2="16" y2="18" stroke="#3b3222" stroke-width="2.6" stroke-linecap="round"/>
<path d="M16.6 7.3 L23.6 7.5 L26.7 17.8 L24 21.3 L17.4 21.3 L14.3 10.8 Z" fill="#dcd7c2" stroke="#3a3020" stroke-width="1.2" stroke-linejoin="round"/>
<path d="M17 9 L19 18 L25.5 18" fill="none" stroke="#3a3020" stroke-width="0.8"/>
<ellipse cx="21.3" cy="11" rx="1" ry="1.4" fill="none" stroke="#5a5040" stroke-width="0.7"/>
</svg></div>
<div class="abs" style="left:643px;top:19.5px"><svg width="24" height="29" viewBox="0 0 24 29" style="display:block">
<path d="M12.5 0.6 L16 2.2 L19.6 4.4 L20.5 7 L21.7 9.5 L22.6 10.9 L19.9 13 L23.8 13.9 L22 16 L20.8 17.5 L17.5 18.6 L15.8 18.9 L17 22.2 L14.6 26.4 L13.2 21 L12.2 20 L11.2 21 L10.4 28.4 L9.5 25.5 L7.8 23.7 L8.3 21.5 L7.8 18.6 L3.9 17.5 L1.6 13.9 L5.1 12.4 L0.2 12.1 L2.1 9.5 L3.5 7 L5.4 3.2 L9 2.2 Z" fill="#e2452f"/>
<path d="M12.2 6.3 C15.1 6.3 17.4 8.6 17.4 11.5 C17.4 14.5 14.8 16.5 13.6 19.5 L12.5 28.5 L11.9 28.5 L10.8 19.5 C9.6 16.5 7 14.5 7 11.5 C7 8.6 9.3 6.3 12.2 6.3 Z" fill="#f9f9f9"/>
<circle cx="12.4" cy="10.9" r="2.3" fill="#e2452f"/>
</svg></div>
<div class="c ctr" style="left:712.5px;width:200px;color:#4a75aa;letter-spacing:0.4px">2x2</div>
<div class="abs badge" style="left:962.0px;top:22px;width:98px">Legion Fun</div>
<div class="c ctr" style="left:1148.5px;width:200px;color:#52923a;letter-spacing:0.4px">35</div>
<div class="c ctr" style="left:1370.5px;width:200px;color:#d9352f;letter-spacing:0.4px">25</div>
<div class="c ctr" style="left:1606px;width:200px;color:#f08a3c;font-weight:bold;letter-spacing:0.4px">1629</div>
</div>
<div class="row hov" style="top:691px;height:70px">
<div class="c " style="left:11px;color:#4a75aa;letter-spacing:0.4px">18</div>
<div class="c ctr" style="left:68.5px;width:400px;color:#e04c34;-webkit-text-stroke:0.4px #e04c34;letter-spacing:0.8px">Дисти</div>
<div class="abs" style="left:464px;top:17px"><svg width="33" height="34" viewBox="0 0 33 34" style="display:block"><rect x="0" y="0" width="33" height="34" fill="#f1b547"/>
<g stroke="#f8d27a" stroke-width="0.8" opacity="0.9"><line x1="19" y1="16" x2="5" y2="8"/><line x1="19" y1="16" x2="5" y2="14"/><line x1="19" y1="16" x2="6" y2="20"/><line x1="19" y1="16" x2="14" y2="29"/><line x1="19" y1="16" x2="21" y2="29"/><line x1="19" y1="16" x2="27" y2="27"/></g>
<rect x="3.9" y="3.9" width="25.3" height="26" rx="2.5" fill="none" stroke="#3e2f14" stroke-width="1.8"/>
<line x1="9" y1="26.5" x2="16" y2="18" stroke="#3b3222" stroke-width="2.6" stroke-linecap="round"/>
<path d="M16.6 7.3 L23.6 7.5 L26.7 17.8 L24 21.3 L17.4 21.3 L14.3 10.8 Z" fill="#dcd7c2" stroke="#3a3020" stroke-width="1.2" stroke-linejoin="round"/>
<path d="M17 9 L19 18 L25.5 18" fill="none" stroke="#3a3020" stroke-width="0.8"/>
<ellipse cx="21.3" cy="11" rx="1" ry="1.4" fill="none" stroke="#5a5040" stroke-width="0.7"/>
</svg></div>
<div class="abs" style="left:643px;top:19.5px"><svg width="24" height="29" viewBox="0 0 24 29" style="display:block">
<path d="M12.5 0.6 L16 2.2 L19.6 4.4 L20.5 7 L21.7 9.5 L22.6 10.9 L19.9 13 L23.8 13.9 L22 16 L20.8 17.5 L17.5 18.6 L15.8 18.9 L17 22.2 L14.6 26.4 L13.2 21 L12.2 20 L11.2 21 L10.4 28.4 L9.5 25.5 L7.8 23.7 L8.3 21.5 L7.8 18.6 L3.9 17.5 L1.6 13.9 L5.1 12.4 L0.2 12.1 L2.1 9.5 L3.5 7 L5.4 3.2 L9 2.2 Z" fill="#e2452f"/>
<path d="M12.2 6.3 C15.1 6.3 17.4 8.6 17.4 11.5 C17.4 14.5 14.8 16.5 13.6 19.5 L12.5 28.5 L11.9 28.5 L10.8 19.5 C9.6 16.5 7 14.5 7 11.5 C7 8.6 9.3 6.3 12.2 6.3 Z" fill="#f5f5f5"/>
<circle cx="12.4" cy="10.9" r="2.3" fill="#e2452f"/>
</svg></div>
<div class="c ctr" style="left:712.5px;width:200px;color:#4a75aa;letter-spacing:0.4px">2x2</div>
<div class="abs badge" style="left:958.0px;top:22px;width:106px">Legion x100</div>
<div class="c ctr" style="left:1148.5px;width:200px;color:#52923a;letter-spacing:0.4px">45</div>
<div class="c ctr" style="left:1370.5px;width:200px;color:#d9352f;letter-spacing:0.4px">34</div>
<div class="c ctr" style="left:1606px;width:200px;color:#f08a3c;font-weight:bold;letter-spacing:0.4px">1616</div>
</div>
<div class="row gray" style="top:761px;height:70px">
<div class="c " style="left:11px;color:#4a75aa;letter-spacing:0.4px">19</div>
<div class="c ctr" style="left:68.5px;width:400px;color:#fff;-webkit-text-stroke:0.4px #fff"><span style="background:#3390ff;padding:3px 0 3px 0;letter-spacing:0.8px">Lantamma</span></div>
<div class="abs" style="left:464px;top:17px"><svg width="33" height="34" viewBox="0 0 33 34" style="display:block"><rect x="0" y="0" width="33" height="34" fill="#f1b547"/>
<g stroke="#f8d27a" stroke-width="0.8" opacity="0.9"><line x1="19" y1="16" x2="5" y2="8"/><line x1="19" y1="16" x2="5" y2="14"/><line x1="19" y1="16" x2="6" y2="20"/><line x1="19" y1="16" x2="14" y2="29"/><line x1="19" y1="16" x2="21" y2="29"/><line x1="19" y1="16" x2="27" y2="27"/></g>
<rect x="3.9" y="3.9" width="25.3" height="26" rx="2.5" fill="none" stroke="#3e2f14" stroke-width="1.8"/>
<line x1="9" y1="26.5" x2="16" y2="18" stroke="#3b3222" stroke-width="2.6" stroke-linecap="round"/>
<path d="M16.6 7.3 L23.6 7.5 L26.7 17.8 L24 21.3 L17.4 21.3 L14.3 10.8 Z" fill="#dcd7c2" stroke="#3a3020" stroke-width="1.2" stroke-linejoin="round"/>
<path d="M17 9 L19 18 L25.5 18" fill="none" stroke="#3a3020" stroke-width="0.8"/>
<ellipse cx="21.3" cy="11" rx="1" ry="1.4" fill="none" stroke="#5a5040" stroke-width="0.7"/>
</svg></div>
<div class="abs" style="left:643px;top:19.5px"><svg width="24" height="31" viewBox="0 0 24 31" style="display:block">
<path d="M1.78 17.90 L1.66 14.77 L0.20 12.00 L1.66 9.23 L1.78 6.10 L4.43 4.43 L6.10 1.78 L9.23 1.66 L12.00 0.20 L14.77 1.66 L17.90 1.78 L19.57 4.43 L22.22 6.10 L22.34 9.23 L23.80 12.00 L22.34 14.77 L22.22 17.90 L19.50 21.50 L16.50 26.00 L12.00 30.80 L7.50 26.00 L4.50 21.50 Z" fill="#4f87e4"/>
<path d="M4.5 21.5 L7.5 26 L12 30.8 L16.5 26 L19.5 21.5 L17 21 L12 27 L7 21 Z" fill="#9cb7e8"/>
<path d="M12 28 L6.8 22 L4.4 18 A9 9 0 1 1 19.6 18 L17.2 22 Z" fill="#f9f9f9"/>
<g stroke="#f9f9f9" stroke-width="1"><line x1="15.38" y1="4.75" x2="17.28" y2="0.67"/><line x1="8.62" y1="4.75" x2="6.72" y2="0.67"/><line x1="4.48" y1="9.26" x2="0.25" y2="7.72"/><line x1="19.52" y1="9.26" x2="23.75" y2="7.72"/><line x1="4.48" y1="14.74" x2="0.25" y2="16.28"/><line x1="19.52" y1="14.74" x2="23.75" y2="16.28"/></g>
<path d="M7.3 10 L7.3 7 L9.5 6 L10.8 7.5 L12 5.9 L13.2 7.5 L14.5 6 L16.7 7 L16.7 10 Z" fill="#8fb2ec"/>
<path d="M7.9 10.3 L16.1 10.3 L16.8 14 L15 18.5 L9 18.5 L7.2 14 Z" fill="#3f78dc"/>
<path d="M11 10.8 L13 10.8 L12.6 16.5 L11.4 16.5 Z" fill="#78a4ef"/>
<ellipse cx="12" cy="20.6" rx="2" ry="1.2" fill="#3f76d8"/>
</svg></div>
<div class="c ctr" style="left:712.5px;width:200px;color:#4a75aa;letter-spacing:0.4px">2x2</div>
<div class="abs badge" style="left:958.0px;top:22px;width:106px">Legion x100</div>
<div class="c ctr" style="left:1148.5px;width:200px;color:#52923a;letter-spacing:0.4px">90</div>
<div class="c ctr" style="left:1370.5px;width:200px;color:#d9352f;letter-spacing:0.4px">94</div>
<div class="c ctr" style="left:1606px;width:200px;color:#f08a3c;font-weight:bold;letter-spacing:0.4px">1603</div>
</div>
<div class="row" style="top:831px;height:70px">
<div class="c " style="left:11px;color:#4a75aa;letter-spacing:0.4px">20</div>
<div class="c ctr" style="left:68.5px;width:400px;color:#4a6c99;-webkit-text-stroke:0.4px #4a6c99;letter-spacing:0.8px">Lightboom</div>
<div class="abs" style="left:464px;top:17px"><svg width="33" height="34" viewBox="0 0 33 34" style="display:block"><rect x="0" y="0" width="33" height="34" fill="#f1b547"/>
<g stroke="#f8d27a" stroke-width="0.8" opacity="0.9"><line x1="19" y1="16" x2="5" y2="8"/><line x1="19" y1="16" x2="5" y2="14"/><line x1="19" y1="16" x2="6" y2="20"/><line x1="19" y1="16" x2="14" y2="29"/><line x1="19" y1="16" x2="21" y2="29"/><line x1="19" y1="16" x2="27" y2="27"/></g>
<rect x="3.9" y="3.9" width="25.3" height="26" rx="2.5" fill="none" stroke="#3e2f14" stroke-width="1.8"/>
<line x1="9" y1="26.5" x2="16" y2="18" stroke="#3b3222" stroke-width="2.6" stroke-linecap="round"/>
<path d="M16.6 7.3 L23.6 7.5 L26.7 17.8 L24 21.3 L17.4 21.3 L14.3 10.8 Z" fill="#dcd7c2" stroke="#3a3020" stroke-width="1.2" stroke-linejoin="round"/>
<path d="M17 9 L19 18 L25.5 18" fill="none" stroke="#3a3020" stroke-width="0.8"/>
<ellipse cx="21.3" cy="11" rx="1" ry="1.4" fill="none" stroke="#5a5040" stroke-width="0.7"/>
</svg></div>
<div class="abs" style="left:643px;top:19.5px"><svg width="24" height="31" viewBox="0 0 24 31" style="display:block">
<path d="M1.78 17.90 L1.66 14.77 L0.20 12.00 L1.66 9.23 L1.78 6.10 L4.43 4.43 L6.10 1.78 L9.23 1.66 L12.00 0.20 L14.77 1.66 L17.90 1.78 L19.57 4.43 L22.22 6.10 L22.34 9.23 L23.80 12.00 L22.34 14.77 L22.22 17.90 L19.50 21.50 L16.50 26.00 L12.00 30.80 L7.50 26.00 L4.50 21.50 Z" fill="#4f87e4"/>
<path d="M4.5 21.5 L7.5 26 L12 30.8 L16.5 26 L19.5 21.5 L17 21 L12 27 L7 21 Z" fill="#9cb7e8"/>
<path d="M12 28 L6.8 22 L4.4 18 A9 9 0 1 1 19.6 18 L17.2 22 Z" fill="#ffffff"/>
<g stroke="#ffffff" stroke-width="1"><line x1="15.38" y1="4.75" x2="17.28" y2="0.67"/><line x1="8.62" y1="4.75" x2="6.72" y2="0.67"/><line x1="4.48" y1="9.26" x2="0.25" y2="7.72"/><line x1="19.52" y1="9.26" x2="23.75" y2="7.72"/><line x1="4.48" y1="14.74" x2="0.25" y2="16.28"/><line x1="19.52" y1="14.74" x2="23.75" y2="16.28"/></g>
<path d="M7.3 10 L7.3 7 L9.5 6 L10.8 7.5 L12 5.9 L13.2 7.5 L14.5 6 L16.7 7 L16.7 10 Z" fill="#8fb2ec"/>
<path d="M7.9 10.3 L16.1 10.3 L16.8 14 L15 18.5 L9 18.5 L7.2 14 Z" fill="#3f78dc"/>
<path d="M11 10.8 L13 10.8 L12.6 16.5 L11.4 16.5 Z" fill="#78a4ef"/>
<ellipse cx="12" cy="20.6" rx="2" ry="1.2" fill="#3f76d8"/>
</svg></div>
<div class="c ctr" style="left:712.5px;width:200px;color:#4a75aa;letter-spacing:0.4px">2x2</div>
<div class="abs badge" style="left:958.0px;top:22px;width:106px">Legion x100</div>
<div class="c ctr" style="left:1148.5px;width:200px;color:#52923a;letter-spacing:0.4px">40</div>
<div class="c ctr" style="left:1370.5px;width:200px;color:#d9352f;letter-spacing:0.4px">31</div>
<div class="c ctr" style="left:1606px;width:200px;color:#f08a3c;font-weight:bold;letter-spacing:0.4px">1600</div>
</div>
<div class="row gray" style="top:901px;height:70px">
<div class="c " style="left:11px;color:#4a75aa;letter-spacing:0.4px">21</div>
<div class="c ctr" style="left:68.5px;width:400px;color:#4a6c99;-webkit-text-stroke:0.4px #4a6c99;letter-spacing:0.8px">Phanopticum</div>
<div class="abs" style="left:464px;top:17px"><svg width="33" height="34" viewBox="0 0 33 34" style="display:block"><rect x="0" y="0" width="33" height="34" fill="#f1b547"/>
<g stroke="#f8d27a" stroke-width="0.8" opacity="0.9"><line x1="19" y1="16" x2="5" y2="8"/><line x1="19" y1="16" x2="5" y2="14"/><line x1="19" y1="16" x2="6" y2="20"/><line x1="19" y1="16" x2="14" y2="29"/><line x1="19" y1="16" x2="21" y2="29"/><line x1="19" y1="16" x2="27" y2="27"/></g>
<rect x="3.9" y="3.9" width="25.3" height="26" rx="2.5" fill="none" stroke="#3e2f14" stroke-width="1.8"/>
<line x1="9" y1="26.5" x2="16" y2="18" stroke="#3b3222" stroke-width="2.6" stroke-linecap="round"/>
<path d="M16.6 7.3 L23.6 7.5 L26.7 17.8 L24 21.3 L17.4 21.3 L14.3 10.8 Z" fill="#dcd7c2" stroke="#3a3020" stroke-width="1.2" stroke-linejoin="round"/>
<path d="M17 9 L19 18 L25.5 18" fill="none" stroke="#3a3020" stroke-width="0.8"/>
<ellipse cx="21.3" cy="11" rx="1" ry="1.4" fill="none" stroke="#5a5040" stroke-width="0.7"/>
</svg></div>
<div class="abs" style="left:643px;top:19.5px"><svg width="24" height="31" viewBox="0 0 24 31" style="display:block">
<path d="M1.78 17.90 L1.66 14.77 L0.20 12.00 L1.66 9.23 L1.78 6.10 L4.43 4.43 L6.10 1.78 L9.23 1.66 L12.00 0.20 L14.77 1.66 L17.90 1.78 L19.57 4.43 L22.22 6.10 L22.34 9.23 L23.80 12.00 L22.34 14.77 L22.22 17.90 L19.50 21.50 L16.50 26.00 L12.00 30.80 L7.50 26.00 L4.50 21.50 Z" fill="#4f87e4"/>
<path d="M4.5 21.5 L7.5 26 L12 30.8 L16.5 26 L19.5 21.5 L17 21 L12 27 L7 21 Z" fill="#9cb7e8"/>
<path d="M12 28 L6.8 22 L4.4 18 A9 9 0 1 1 19.6 18 L17.2 22 Z" fill="#f9f9f9"/>
<g stroke="#f9f9f9" stroke-width="1"><line x1="15.38" y1="4.75" x2="17.28" y2="0.67"/><line x1="8.62" y1="4.75" x2="6.72" y2="0.67"/><line x1="4.48" y1="9.26" x2="0.25" y2="7.72"/><line x1="19.52" y1="9.26" x2="23.75" y2="7.72"/><line x1="4.48" y1="14.74" x2="0.25" y2="16.28"/><line x1="19.52" y1="14.74" x2="23.75" y2="16.28"/></g>
<path d="M7.3 10 L7.3 7 L9.5 6 L10.8 7.5 L12 5.9 L13.2 7.5 L14.5 6 L16.7 7 L16.7 10 Z" fill="#8fb2ec"/>
<path d="M7.9 10.3 L16.1 10.3 L16.8 14 L15 18.5 L9 18.5 L7.2 14 Z" fill="#3f78dc"/>
<path d="M11 10.8 L13 10.8 L12.6 16.5 L11.4 16.5 Z" fill="#78a4ef"/>
<ellipse cx="12" cy="20.6" rx="2" ry="1.2" fill="#3f76d8"/>
</svg></div>
<div class="c ctr" style="left:712.5px;width:200px;color:#4a75aa;letter-spacing:0.4px">2x2</div>
<div class="abs badge" style="left:962.0px;top:22px;width:98px">Legion Fun</div>
<div class="c ctr" style="left:1148.5px;width:200px;color:#52923a;letter-spacing:0.4px">43</div>
<div class="c ctr" style="left:1370.5px;width:200px;color:#d9352f;letter-spacing:0.4px">35</div>
<div class="c ctr" style="left:1606px;width:200px;color:#f08a3c;font-weight:bold;letter-spacing:0.4px">1586</div>
</div>
<div id="thead" class="abs">
<div class="abs" style="left:1597px;top:0;width:216px;height:43px;background:linear-gradient(#eef1f5,#e3e8ee)"></div>
<div class="th" style="left:11px;letter-spacing:0.5px">Ранг</div>
<div class="th ctr" style="left:116.45px;width:300px;letter-spacing:0.9px">Имя</div>
<div class="th ctr" style="left:329.65px;width:300px;letter-spacing:0.3px">Класс</div>
<div class="th ctr" style="left:502.15px;width:300px;letter-spacing:1.3px">Фракция</div>
<div class="th ctr" style="left:654.55px;width:300px;letter-spacing:0.5px">Тип</div>
<div class="th ctr" style="left:852.8px;width:300px;letter-spacing:1.0px">Игровой мир</div>
<div class="th ctr" style="left:1093.8px;width:300px;letter-spacing:0.6px">Победы</div>
<div class="th ctr" style="left:1317.5px;width:300px;letter-spacing:1.0px">Поражения</div>
<div class="th ctr" style="left:1550.7px;width:300px;font-weight:bold;color:#3d7cc2;letter-spacing:0.3px">Рейтинг</div>
<div class="abs" style="left:1794px;top:22px;width:0;height:0;border-left:4.5px solid transparent;border-right:4.5px solid transparent;border-top:5px solid #3a7cc8"></div>
</div>
</div>
</div>
<div id="taskbar" class="abs"></div>

<div class="abs" style="left:308px;top:1030px;width:61px;height:50px;background:#2e2e2e"></div>
<div class="abs" style="left:251px;top:1077px;width:51px;height:3px;background:#7e87c0"></div>
<div class="abs" style="left:308px;top:1077px;width:61px;height:3px;background:#7e87c0"></div>
<svg class="abs" style="left:0;top:1030px" width="1920" height="50" viewBox="0 1030 1920 50">
<!-- windows logo -->
<path d="M20 1046.5 L29 1045.3 L29 1054.3 L20 1054.3 Z M30.3 1045.1 L40.2 1043.8 L40.2 1054.3 L30.3 1054.3 Z M20 1055.6 L29 1055.6 L29 1064.6 L20 1063.4 Z M30.3 1055.6 L40.2 1055.6 L40.2 1066 L30.3 1064.8 Z" fill="#fff"/>
<!-- search -->
<circle cx="93" cy="1052" r="6.8" fill="none" stroke="#fff" stroke-width="1.5"/>
<line x1="88" y1="1057" x2="80.5" y2="1064.5" stroke="#fff" stroke-width="1.5"/>
<!-- task view -->
<g fill="none" stroke="#fff" stroke-width="1.3">
<path d="M140.6 1049 L140.6 1045.8 L152.4 1045.8 L152.4 1049"/>
<rect x="140.6" y="1051" width="11.8" height="8.8"/>
<path d="M140.6 1060.5 L140.6 1063.6 L152.4 1063.6 L152.4 1060.5"/>
<path d="M158.3 1045 L158.3 1064.5"/>
</g>
<rect x="156.6" y="1051" width="3.4" height="3.4" fill="#fff"/>
<!-- explorer -->
<path d="M200.5 1043.5 L209 1043.5 L211 1045.5 L227 1045.5 L227 1064.5 L200.5 1064.5 Z" fill="#f2c34a"/>
<rect x="200.5" y="1047" width="26.5" height="17.5" fill="#f9dc80"/>
<rect x="201.5" y="1044.5" width="4" height="1.5" fill="#fff"/>
<path d="M205 1066 L205 1055.5 Q205 1054.8 205.8 1054.8 L221.9 1054.8 Q222.7 1054.8 222.7 1055.5 L222.7 1066 L218.5 1066 L218.5 1059 L209.2 1059 L209.2 1066 Z" fill="#2aa0e4"/>
<!-- app icon -->
<defs><linearGradient id="appg" x1="0" y1="0" x2="0" y2="1"><stop offset="0" stop-color="#2d4f82"/><stop offset="1" stop-color="#18253f"/></linearGradient></defs>
<rect x="262" y="1041" width="28" height="28" rx="1" fill="url(#appg)"/>
<path d="M263.5 1049 Q268 1046.5 271 1049 L274 1052 Q273 1056 276 1061 L274.5 1062.5 Q270 1060 269.5 1055 L267.5 1052 L265 1052.5 Z" fill="#3aa3e0"/>
<path d="M286 1046.5 Q284 1050 283.5 1053 Q283 1058 284 1062.5 L281 1061.5 Q279 1058 279.5 1053 Q281 1048.5 286 1046.5 Z" fill="#3aa3e0"/>
<path d="M274 1052 Q276 1047 278.5 1052 Q279.5 1058 277 1062.5 Q274.5 1058 274 1052 Z" fill="#3aa3e0"/>
<path d="M276.3 1053 Q277 1051.5 277.5 1053 L277.5 1058 Q277 1059.5 276.3 1058 Z" fill="#0e2038"/>
<!-- chrome -->
<circle cx="337.5" cy="1054.5" r="13.8" fill="#db4437"/>
<path d="M337.5 1054.5 L349.4 1047.6 A13.8 13.8 0 0 1 337.5 1068.3 Z" fill="#fbbc05"/>
<path d="M337.5 1054.5 L337.5 1068.3 A13.8 13.8 0 0 1 325.6 1047.6 Z" fill="#0f9d58"/>
<circle cx="337.5" cy="1054.5" r="6" fill="#fff"/>
<circle cx="337.5" cy="1054.5" r="4.7" fill="#4285f4"/>
<circle cx="345.3" cy="1062.2" r="10.3" fill="#2e2e2e"/>
<circle cx="345.3" cy="1062.2" r="9.4" fill="#1fbf9f"/>
<path d="M340.5 1062 L344.5 1062 M346 1062 L350 1062" stroke="#1f3a33" stroke-width="1.5"/>
<!-- people -->
<g fill="none" stroke="#fff" stroke-width="1.3">
<circle cx="1578" cy="1049.5" r="3.5"/><path d="M1572.5 1058 Q1574 1053.5 1578 1053.5 Q1582 1053.5 1583 1058"/>
<circle cx="1569.5" cy="1055" r="3.5"/><path d="M1564 1064 Q1565 1058.5 1569.5 1058.5 Q1574 1058.5 1575 1064"/>
</g>
<!-- caret -->
<path d="M1610 1059 L1618 1051 L1626 1059" fill="none" stroke="#fff" stroke-width="1.3"/>
<!-- battery -->
<rect x="1641" y="1050.5" width="15.5" height="9.5" fill="#fff"/>
<rect x="1656.5" y="1053" width="1.8" height="4.5" fill="#fff"/>
<path d="M1638 1050 L1641 1050 M1639 1048.5 L1639 1051.5 M1641 1048.5 L1641 1051.5" stroke="#fff" stroke-width="1"/>
<!-- speaker -->
<path d="M1668.5 1052 L1672 1052 L1677 1048.5 L1677 1061.5 L1672 1058 L1668.5 1058 Z" fill="none" stroke="#fff" stroke-width="1.3"/>
<path d="M1680 1051.5 L1686 1057.5 M1686 1051.5 L1680 1057.5" stroke="#fff" stroke-width="1.3"/>
<!-- wifi -->
<g fill="none" stroke="#fff" stroke-width="1.3">
<path d="M1701 1063 A16 16 0 0 1 1717 1047.5"/>
<path d="M1705 1063 A12 12 0 0 1 1717 1051.5"/>
<path d="M1709 1063 A8 8 0 0 1 1717 1055.5"/>
</g>
<circle cx="1714.5" cy="1062" r="1.5" fill="#fff"/>
<!-- notification -->
<path d="M1869 1045 L1889.5 1045 L1889.5 1061 L1876 1061 L1872 1065 L1872 1061 L1869 1061 Z" fill="#fff"/>
<path d="M1872.5 1049 L1886 1049 M1872.5 1052.5 L1886 1052.5 M1872.5 1056 L1882 1056" stroke="#101010" stroke-width="1"/>
<circle cx="1888.5" cy="1064.2" r="10" fill="#2b2b2b" stroke="#808080" stroke-width="1"/>
<text x="1888.5" y="1069.5" text-anchor="middle" font-family="Liberation Sans" font-weight="bold" font-size="14" fill="#fff">2</text>
<line x1="1915" y1="1030" x2="1915" y2="1080" stroke="#4a4a4a" stroke-width="1"/>
</svg>
<div class="abs" style="left:1731px;top:1046px;font-size:14.5px;line-height:18px;color:#fff;white-space:nowrap">ENG</div>
<div class="abs" style="left:1760px;top:1034px;width:104px;text-align:center;font-size:14.5px;line-height:18px;color:#fff;white-space:nowrap">23:22</div>
<div class="abs" style="left:1760px;top:1057px;width:104px;text-align:center;font-size:14.5px;line-height:18px;color:#fff;white-space:nowrap">14.03.2020</div>

<div class="abs" style="left:1916px;top:448px;width:3px;height:379px;background:#505050"></div>
</body></html>
